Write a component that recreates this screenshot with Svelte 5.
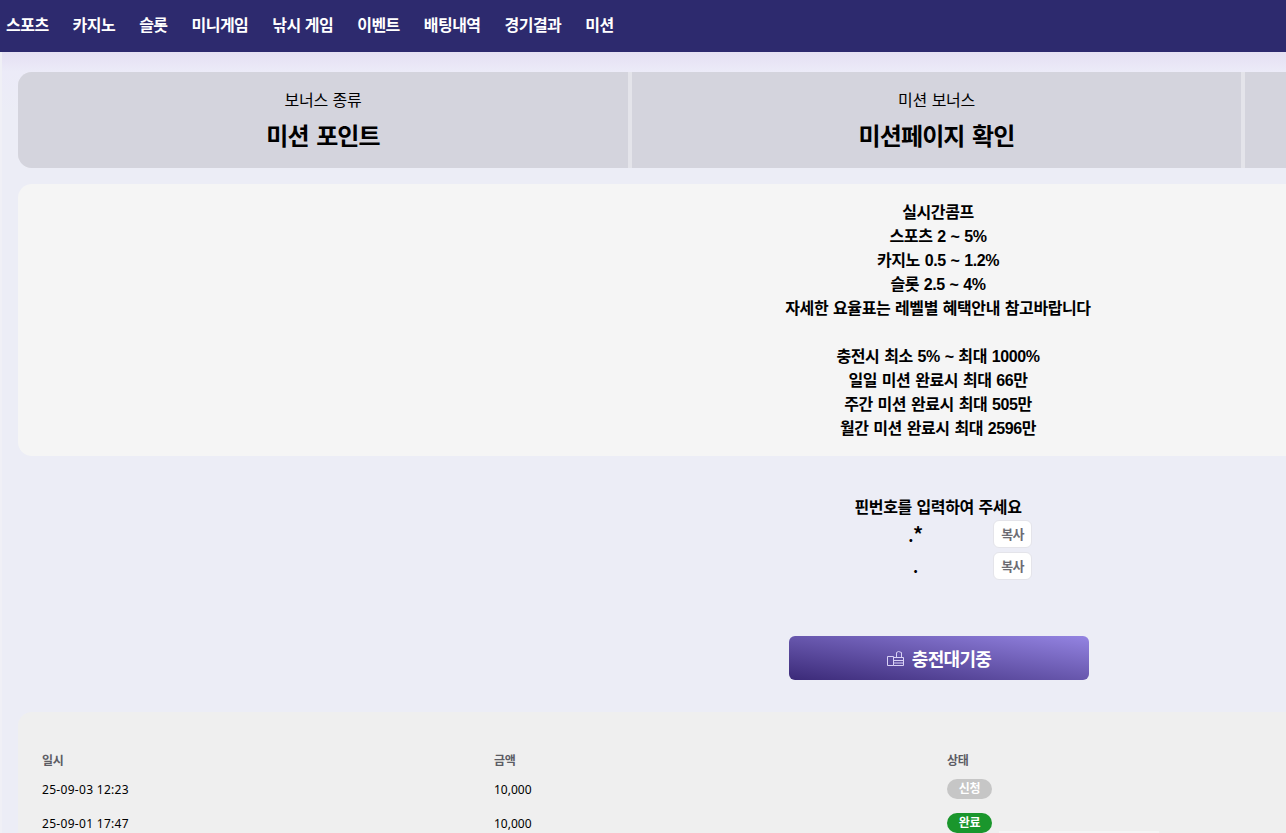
<script>
  const nav = ['스포츠','카지노','슬롯','미니게임','낚시 게임','이벤트','배팅내역','경기결과','미션'];
  const cols = [['보너스 종류','미션 포인트'],['미션 보너스','미션페이지 확인'],['','']];
  const lines = ['실시간콤프','스포츠 2 ~ 5%','카지노 0.5 ~ 1.2%','슬롯 2.5 ~ 4%','자세한 요율표는 레벨별 혜택안내 참고바랍니다','\u00a0','충전시 최소 5% ~ 최대 1000%','일일 미션 완료시 최대 66만','주간 미션 완료시 최대 505만','월간 미션 완료시 최대 2596만'];
  const rows = [['25-09-03 12:23','10,000','신청','req'],['25-09-01 17:47','10,000','완료','done']];
</script>

<div class="page">
  <nav class="nav">
    {#each nav as n}<a href="#top">{n}</a>{/each}
  </nav>
  <main class="main">
    <section class="cols">
      {#each cols as c}
        <div class="col"><div class="sub">{c[0]}</div><div class="big">{c[1]}</div></div>
      {/each}
    </section>
    <section class="notice">
      {#each lines as l}<div>{l}</div>{/each}
    </section>
    <section class="pin">
      <div class="pin-title">핀번호를 입력하여 주세요</div>
      <div class="pin-row"><span class="val"><span class="dot">.</span><span class="star">*</span></span><button class="copy">복사</button></div>
      <div class="pin-row"><span class="val"><span class="dot">.</span></span><button class="copy">복사</button></div>
    </section>
    <button class="wait">
      <svg width="17" height="15" viewBox="0 0 17 15" fill="none" stroke="#d9d2f5" stroke-width="1"><path d="M.5 5.5h6v9h-6zM6.5 6.5h10v8h-10M9.5 6V1.5l2-1 3 1V6M6.5 9.5h10M6.5 12h10"/></svg>
      <span>충전대기중</span>
    </button>
    <section class="history">
      <div class="tr th"><div>일시</div><div>금액</div><div>상태</div></div>
      {#each rows as r}
        <div class="tr"><div class="date">{r[0]}</div><div>{r[1]}</div><div><span class="badge {r[3]}">{r[2]}</span></div></div>
      {/each}
      <div class="ghost"></div>
    </section>
  </main>
</div>

<style>
  :global(body){margin:0;overflow:hidden;background:#ecedf6;}
  .page{width:1286px;height:833px;overflow:hidden;font-family:"Noto Sans CJK KR","Noto Sans",sans-serif;color:#000;background:#ecedf6;}
  .nav{height:52px;background:#2d2a6e;display:flex;align-items:center;gap:24px;padding:0 6px 5px;box-sizing:border-box;}
  .nav a{color:#fff;text-decoration:none;font-size:16px;font-weight:700;letter-spacing:-.53px;word-spacing:1px;line-height:24px;white-space:nowrap;}
  .main{width:1840px;padding:20px 0 0 16px;border-left:2px solid #f0f0f6;background:linear-gradient(#e5e0f3 0,#ecebf8 20px,#ecedf6 60px);}
  .cols{display:grid;grid-template-columns:610px 609px 610px;gap:4px;height:96px;border-radius:14px 0 0 14px;overflow:hidden;background:#e4e4ea;}
  .col{background:#d4d4dd;text-align:center;padding-top:16px;box-sizing:border-box;}
  .sub{font-size:16px;line-height:22px;letter-spacing:-.3px;word-spacing:1.5px;}
  .big{font-size:24px;font-weight:700;line-height:36px;letter-spacing:-.9px;word-spacing:3px;margin-top:7px;}
  .notice{margin-top:16px;height:272px;box-sizing:border-box;padding-top:17px;background:#f5f5f5;border-radius:14px;text-align:center;font-family:"Liberation Sans","Noto Sans CJK KR",sans-serif;font-size:16px;font-weight:700;line-height:24px;letter-spacing:-.4px;word-spacing:.7px;}
  .pin{margin-top:39px;text-align:center;font-size:16px;font-weight:700;letter-spacing:-.4px;word-spacing:1.5px;}
  .pin-title{line-height:23px;}
  .pin-row{height:32px;display:flex;justify-content:center;align-items:center;}
  .val{font-size:16px;font-weight:700;line-height:1;width:149px;text-align:center;padding-right:6px;box-sizing:border-box;}
  .star{font-size:20px;}
  .copy{width:39px;height:28px;border:1px solid #e4e4ea;border-radius:6px;background:#fff;color:#6c6c74;font:700 13px "Noto Sans CJK KR",sans-serif;letter-spacing:-.7px;padding:0 0 2px;}
  .wait{display:flex;margin:54px 0 0 771px;width:300px;height:44px;border:0;border-radius:6px;align-items:center;justify-content:center;gap:8px;color:#fff;font:700 18px "Noto Sans CJK KR",sans-serif;letter-spacing:-.7px;background:linear-gradient(to bottom left,#9484e2,#3b2a78);padding:0;}
  .history{margin-top:32px;height:300px;background:#efefef;border-radius:14px;padding:37px 24px 0;box-sizing:border-box;position:relative;}
  .tr{display:grid;grid-template-columns:452px 453px 1fr;height:34px;align-items:center;font-size:12px;font-family:"Noto Sans","Noto Sans CJK KR",sans-serif;}
  .date{letter-spacing:.3px;}
  .th{height:22px;font-weight:700;color:#5c5c64;letter-spacing:-.4px;margin-bottom:1px;}
  .badge{display:inline-block;width:45px;height:20px;border-radius:10px;text-align:center;line-height:20px;color:#fff;font-weight:700;letter-spacing:-.3px;}
  .req{background:#c6c6c6;}
  .done{background:#1a962c;}
  .ghost{position:absolute;left:981px;top:119px;width:160px;height:40px;background:#f5f5f5;}
</style>
